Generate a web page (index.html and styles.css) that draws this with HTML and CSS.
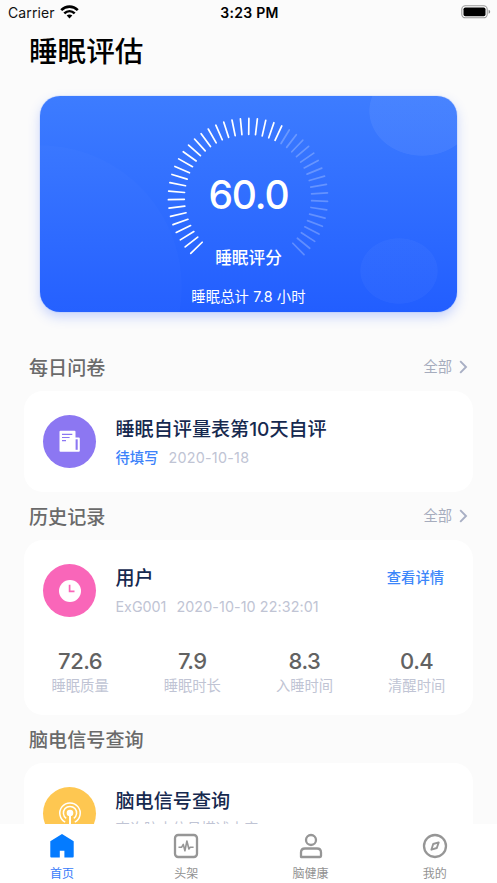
FILE: index.html
```html
<!DOCTYPE html>
<html lang="zh-CN">
<head>
<meta charset="utf-8">
<meta name="viewport" content="width=device-width, initial-scale=1">
<title>睡眠评估</title>
<link rel="stylesheet" href="styles.css">
</head>
<body>
<div class="app">
  <header class="status">
    <div class="status-left"><span>Carrier</span>
      <svg class="wifi" width="19" height="14" viewBox="0 0 19 14" fill="none" stroke="#000" stroke-width="2.6"><path d="M1.2 5.1C6 .4 13 .4 17.8 5.1"/><path d="M4.3 8.4C7.4 5.5 11.6 5.5 14.7 8.4"/><path d="M9.5 13.4 6.7 10.6C8.3 9.2 10.7 9.2 12.3 10.6Z" fill="#000" stroke="none"/></svg>
    </div>
    <div class="status-time">3:23 PM</div>
    <div class="status-right">
      <svg width="30" height="14" viewBox="0 0 30 14"><rect x=".8" y=".8" width="25.4" height="12" rx="3.6" fill="#fff" stroke="#999" stroke-width="1.1"/><rect x="2.5" y="2.4" width="22" height="8.8" rx="1.8" fill="#000"/><path d="M27.6 4.8q1.6.6 1.6 2t-1.6 2z" fill="#888"/></svg>
    </div>
  </header>
  <main class="content">
    <h1 class="title">睡眠评估</h1>
    <section class="score-card">
      <div class="bubble bubble-left"></div>
      <div class="bubble bubble-top"></div>
      <div class="bubble bubble-bottom"></div>
      <svg class="gauge" viewBox="-84 -84 168 168" id="gauge"></svg>
      <div class="score">60.0</div>
      <div class="score-label">睡眠评分</div>
      <div class="score-total">睡眠总计 7.8 小时</div>
    </section>

    <div class="section-head head-first"><h2>每日问卷</h2><a class="more"><span>全部</span><svg width="9" height="14" viewBox="0 0 9 14"><path d="M1.2 1.2 7 7 1.2 12.8"/></svg></a></div>
    <section class="card card-survey">
      <div class="row">
        <div class="badge badge-purple">
          <svg width="22" height="23" viewBox="0 0 22 23"><path d="M1.5.7h14q1 0 1 1V7.5h3.3q1 0 1 1v12.2q0 1-1 1H1.5q-1 0-1-1V1.7q0-1 1-1z" fill="#fff"/><path d="M3 4.3h10.3M3 7.5h7.6M3 10.7h4" stroke="#8c77f2" stroke-width="1.2"/><path d="M16.6 9.3h2.1v10.5h-2.1z" fill="#8c77f2"/></svg>
        </div>
        <div class="info">
          <h3>睡眠自评量表第10天自评</h3>
          <p><span class="pending">待填写</span><span class="date">2020-10-18</span></p>
        </div>
      </div>
    </section>

    <div class="section-head"><h2>历史记录</h2><a class="more"><span>全部</span><svg width="9" height="14" viewBox="0 0 9 14"><path d="M1.2 1.2 7 7 1.2 12.8"/></svg></a></div>
    <section class="card card-history">
      <div class="row">
        <div class="badge badge-pink">
          <svg width="22" height="22" viewBox="0 0 22 22"><circle cx="11" cy="11" r="11" fill="#fff"/><path d="M10.6 4.8v6.5h4.9" fill="none" stroke="#f966b9" stroke-width="1.7"/></svg>
        </div>
        <div class="info">
          <h3>用户</h3>
          <p><span class="code">ExG001</span><span class="stamp">2020-10-10 22:32:01</span></p>
        </div>
        <a class="detail">查看详情</a>
      </div>
      <div class="stats">
        <div><b>72.6</b><span>睡眠质量</span></div>
        <div><b>7.9</b><span>睡眠时长</span></div>
        <div><b>8.3</b><span>入睡时间</span></div>
        <div><b>0.4</b><span>清醒时间</span></div>
      </div>
    </section>

    <div class="section-head"><h2>脑电信号查询</h2></div>
    <section class="card card-eeg">
      <div class="row">
        <div class="badge badge-yellow">
          <svg width="24" height="24" viewBox="0 0 24 24" fill="none" stroke="#fff" stroke-width="1.5"><path d="M7.2 21.1A10.2 10.2 0 1 1 16.8 21.1"/><path d="M8.2 17.4A6.6 6.6 0 1 1 15.8 17.4"/><circle cx="12" cy="12" r="3.3" fill="#fff" stroke="none"/><path d="M12 12v12" stroke-width="2"/></svg>
        </div>
        <div class="info">
          <h3>脑电信号查询</h3>
          <p><span>查询脑电信号描述内容</span></p>
        </div>
      </div>
    </section>
  </main>
  <nav class="tabs">
    <a class="tab active"><svg width="26" height="26" viewBox="0 0 26 26"><path d="M13 1 24.7 8.3V23.5q0 1-1 1H15.4V17.7H10.8V24.5H2.3q-1 0-1-1V8.3z" fill="#047bff"/></svg>首页</a>
    <a class="tab"><svg width="26" height="26" viewBox="0 0 26 26"><rect x="2" y="2" width="22" height="22" rx="3.2" stroke-width="2.3"/><path d="M5.5 14.2h3.2l1.6-2.8 1.6 6.4 2-9.8 2 8 1.2-1.8h3.5" stroke-width="1.6"/></svg>头架</a>
    <a class="tab"><svg width="26" height="26" viewBox="0 0 26 26" stroke-width="2.3"><circle cx="13" cy="7" r="5"/><path d="M3 24V19.5q0-4 4-4H19q4 0 4 4V23q0 1-1 1H4q-1 0-1-1z"/></svg>脑健康</a>
    <a class="tab"><svg width="26" height="26" viewBox="0 0 26 26"><circle cx="13" cy="13" r="11" stroke-width="2.3"/><path d="M16.7 9.4 14.8 15 9.4 16.7 11.2 11z" stroke-width="1.9"/></svg>我的</a>
  </nav>
</div>
<script src="gauge.js"></script>
</body>
</html>
```
FILE: gauge.js
```js
const TICKS = 45;
const SCORE = 60;
const gauge = document.getElementById("gauge");
for (let i = 0; i < TICKS; i++) {
  const line = document.createElementNS("http://www.w3.org/2000/svg", "line");
  line.setAttribute("y1", -63.7);
  line.setAttribute("y2", -79.6);
  line.setAttribute("transform", `rotate(${-134 + i * 6.12})`);
  line.setAttribute("class", i < TICKS * SCORE / 100 ? "tick on" : "tick");
  gauge.appendChild(line);
}
```
FILE: styles.css
```css
* { box-sizing: border-box; margin: 0; padding: 0; }
body { font-family: Inter, "Noto Sans CJK SC", sans-serif; background: #fbfbfb; }
.app { height: 883px; display: flex; flex-direction: column; overflow: hidden; }

.status { height: 26px; flex: none; display: grid; grid-template-columns: 1fr auto 1fr; align-items: center; padding: 0 6px 0 8px; font-size: 14px; line-height: 26px; color: #111; }
.status-left { display: flex; align-items: center; gap: 5px; letter-spacing: .1px; }
.wifi { margin-top: -2px; }
.status-time { font-weight: 600; letter-spacing: .3px; color: #000; }
.status-right { display: flex; justify-content: flex-end; }
.status-right svg { display: block; margin-top: -2px; }

.content { flex: 1; min-height: 0; overflow: hidden; padding: 0 24px; }
.title { height: 70px; padding: 1px 0 0 5px; font-size: 28.6px; line-height: 50px; font-weight: 500; color: #000; }

.score-card { position: relative; height: 216px; margin: 0 16px; border-radius: 20px; color: #fff; text-align: center; background: linear-gradient(180deg, #3d7cff, #225eff); box-shadow: 0 0 1px #4c83ff, 0 5px 12px rgba(50, 100, 255, .25); }
.bubble { position: absolute; inset: 0; border-radius: 20px; }
.bubble-left { background: radial-gradient(circle 142px at 0 191px, rgba(255,255,255,.016) 99.3%, transparent 100%); }
.bubble-top { background: radial-gradient(ellipse 53px 45px at 382px 15px, rgba(255,255,255,.06) 98.5%, transparent 100%); }
.bubble-bottom { background: radial-gradient(ellipse 39px 33px at 359px 175px, rgba(255,255,255,.03) 98%, transparent 100%); }
.gauge { position: absolute; left: 124.3px; top: 18px; width: 168px; height: 168px; }
.tick { stroke: #fff; stroke-opacity: .25; stroke-width: 1.7; stroke-linecap: round; }
.tick.on { stroke-opacity: 1; }
.score { position: relative; padding-top: 74px; font-size: 39px; line-height: 50px; font-weight: 500; letter-spacing: -1.1px; }
.score-label { position: relative; margin-top: 26px; font-size: 16.7px; line-height: 24px; font-weight: 500; }
.score-total { position: relative; margin-top: 16.5px; font-size: 14.3px; line-height: 20px; letter-spacing: .15px; }

.section-head { height: 48.5px; display: flex; align-items: center; justify-content: space-between; padding: 0 5px; color: #6a6a6a; }
.head-first { margin-top: 30.5px; }
h2 { padding-top: 2px; font-size: 19.1px; line-height: 28px; font-weight: 500; }
.more { display: flex; align-items: center; gap: 7px; font-size: 14.3px; line-height: 20px; color: #a6acbd; }
.more span { padding-top: 1px; }
.more svg { margin-top: 1px; fill: none; stroke: #a8afc4; stroke-width: 1.9; }

.card { background: #fff; border-radius: 19px; padding: 24px 29px 0 19px; }
.card-survey { height: 100.5px; }
.card-history { height: 174.5px; }
.card-eeg { height: 101px; }
.row { height: 53px; display: flex; align-items: flex-start; }
.badge { width: 53px; height: 53px; flex: none; border-radius: 50%; display: flex; align-items: center; justify-content: center; }
.badge-purple { background: #8c77f2; }
.badge-pink { background: #f966b9; }
.badge-yellow { background: #fec751; }
.info { flex: 1; margin-left: 19.5px; }
h3 { font-size: 19.1px; line-height: 28px; font-weight: 500; color: #16294f; white-space: nowrap; }
.info p { display: flex; margin-top: 3.5px; font-size: 14.3px; line-height: 22px; color: #c0c4d4; white-space: nowrap; }
.pending { color: #3c82fa; font-weight: 500; margin-right: 10px; }
.date { letter-spacing: .28px; }
.code { margin-right: 10px; }
.stamp { letter-spacing: .1px; }
.detail { font-size: 14.3px; line-height: 28px; font-weight: 500; color: #3c86fa; }
.stats { display: grid; grid-template-columns: repeat(4, 112.2px); margin: 28.5px 0 0 -19px; text-align: center; }
.stats div { display: flex; flex-direction: column; }
.stats b { font-size: 22px; line-height: 30px; font-weight: 500; letter-spacing: -.5px; color: #626262; }
.stats span { font-size: 14.3px; line-height: 20px; color: #c0c4d4; }

.card-eeg { margin-top: -.5px; }

.tabs { height: 59px; flex: none; display: grid; grid-template-columns: repeat(4, 1fr); background: #fff; }
.tab { display: flex; flex-direction: column; align-items: center; padding-top: 8.5px; font-size: 12px; line-height: 18px; color: #929292; }
.tab svg { margin-bottom: 6px; fill: none; stroke: #969696; stroke-linejoin: round; }
.tab.active { color: #377bfa; }
.tab.active svg { stroke: none; }
```
